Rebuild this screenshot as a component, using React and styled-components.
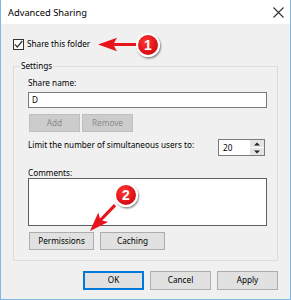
import React from "react";
import styled, { createGlobalStyle } from "styled-components";

const Global = createGlobalStyle`
  html, body { margin: 0; padding: 0; background: #ffffff; }
  * { box-sizing: border-box; }
`;

const FONT = `"Segoe UI", "Noto Sans", "Liberation Sans", sans-serif`;
const FS = 8.2;

const Window = styled.div`
  position: relative;
  width: 291px;
  height: 300px;
  border: 1px solid #82b6e4;
  border-top: none;
  background: #f0f0f0;
  font-family: ${FONT};
  font-size: ${FS}px;
  color: #000;
  display: flex;
  flex-direction: column;
`;

const TitleBar = styled.div`
  height: 24px;
  flex: none;
  background: #ffffff;
  display: flex;
  align-items: center;
  justify-content: space-between;
  padding: 0 6px 0 7px;
`;

const Title = styled.span`
  font-size: 9.3px;
  line-height: 12px;
  margin-top: 2px;
`;

const Body = styled.div`
  padding: 14px 12px 0 12px;
  display: flex;
  flex-direction: column;
`;

const CheckRow = styled.label`
  display: flex;
  align-items: center;
  gap: 3px;
  height: 12px;
  line-height: 12px;
`;

const CheckBox = styled.span`
  width: 11px;
  height: 11px;
  border: 1px solid #333;
  background: #fff;
  display: flex;
  align-items: center;
  justify-content: center;
`;

const GroupBox = styled.fieldset`
  margin: 10px 0 0 0;
  padding: 0 10px 10px 6px;
  border: 1px solid #dcdcdc;
  min-width: 0;
`;

const Legend = styled.legend`
  padding: 0 1px;
  line-height: 12px;
  font-size: ${FS}px;
`;

const GroupContent = styled.div`
  padding-left: 8px;
  display: flex;
  flex-direction: column;
`;

const Label = styled.div`
  line-height: ${(p) => p.$lh || 12}px;
  margin-top: ${(p) => p.$mt || 0}px;
`;

const TextBox = styled.div`
  height: 16px;
  margin-top: 3px;
  border: 1px solid #7a7a7a;
  background: #fff;
  padding: 0 3px;
  line-height: 14px;
`;

const ButtonRow = styled.div`
  display: flex;
  gap: ${(p) => p.$gap}px;
  margin-top: ${(p) => p.$mt}px;
  padding-left: 1px;
  justify-content: ${(p) => (p.$end ? "flex-end" : "flex-start")};
`;

const Button = styled.button`
  font-family: ${FONT};
  font-size: ${FS}px;
  width: ${(p) => p.$w}px;
  height: ${(p) => p.$h || 18}px;
  padding: 0;
  margin: 0;
  background: ${(p) => (p.disabled ? "#cccccc" : "#e1e1e1")};
  color: ${(p) => (p.disabled ? "#8a8a8a" : "#000")};
  border: ${(p) => (p.$default ? "2px solid #0078d7" : p.disabled ? "1px solid #bfbfbf" : "1px solid #adadad")};
  line-height: 1;
`;

const LimitRow = styled.div`
  display: flex;
  align-items: flex-start;
  justify-content: space-between;
  margin-top: 7px;
  padding-right: 2px;
`;

const Spin = styled.div`
  width: 47px;
  height: 17px;
  border: 1px solid #7a7a7a;
  background: #fff;
  display: flex;
`;

const SpinValue = styled.div`
  flex: 1;
  padding-left: 4px;
  line-height: 15px;
`;

const SpinButtons = styled.div`
  width: 14px;
  display: flex;
  flex-direction: column;
  gap: 1px;
  background: #fff;
`;

const SpinBtn = styled.div`
  flex: 1;
  background: #e5e5e5;
  display: flex;
  align-items: center;
  justify-content: center;
`;

const Memo = styled.div`
  height: 48px;
  border: 1px solid #5f5f5f;
  background: #fff;
`;

const Overlay = styled.svg`
  position: absolute;
  left: -1px;
  top: 0;
  width: 291px;
  height: 300px;
  pointer-events: none;
  overflow: visible;
`;

const Badge = styled.div`
  position: absolute;
  left: ${(p) => p.$x - 12}px;
  top: ${(p) => p.$y - 12}px;
  width: 24px;
  height: 24px;
  border-radius: 50%;
  border: 2px solid #fff;
  background: radial-gradient(circle at 40% 35%, #ff3b30 0%, #e0141b 55%, #b5060c 100%);
  box-shadow: 1px 1.5px 2px rgba(0, 0, 0, 0.45);
  color: #fff;
  font-family: "Liberation Sans", Arial, sans-serif;
  font-weight: bold;
  font-size: 14px;
  display: flex;
  align-items: center;
  justify-content: center;
  line-height: 1;
`;

function Arrow({ x, y, angle, len }) {
  return (
    <g transform={`translate(${x} ${y}) rotate(${angle})`}>
      <polygon
        points={`0,0 19,-6.8 16,-1.6 ${len},-1.6 ${len},1.6 16,1.6 19,6.8`}
        fill="#e8141b"
      />
    </g>
  );
}

export default function App() {
  return (
    <>
      <Global />
      <Window>
        <TitleBar>
          <Title>Advanced Sharing</Title>
          <svg width="11" height="11" viewBox="0 0 11 11">
            <path d="M0.5 0.5 L10.5 10.5 M10.5 0.5 L0.5 10.5" stroke="#333" strokeWidth="1.1" />
          </svg>
        </TitleBar>
        <Body>
          <CheckRow>
            <CheckBox>
              <svg width="9" height="9" viewBox="0 0 9 9">
                <polyline points="0.8,4.3 3.3,7 8.3,1" fill="none" stroke="#333" strokeWidth="1.2" />
              </svg>
            </CheckBox>
            Share this folder
          </CheckRow>
          <GroupBox>
            <Legend>Settings</Legend>
            <GroupContent>
              <Label $mt={5}>Share name:</Label>
              <TextBox>D</TextBox>
              <ButtonRow $gap={2} $mt={6}>
                <Button disabled $w={51}>Add</Button>
                <Button disabled $w={51}>Remove</Button>
              </ButtonRow>
              <LimitRow>
                <Label>Limit the number of simultaneous users to:</Label>
                <Spin>
                  <SpinValue>20</SpinValue>
                  <SpinButtons>
                    <SpinBtn>
                      <svg width="6" height="4" viewBox="0 0 6 4">
                        <polygon points="0,3.5 3,0.5 6,3.5" fill="#222" />
                      </svg>
                    </SpinBtn>
                    <SpinBtn>
                      <svg width="6" height="4" viewBox="0 0 6 4">
                        <polygon points="0,0.5 3,3.5 6,0.5" fill="#222" />
                      </svg>
                    </SpinBtn>
                  </SpinButtons>
                </Spin>
              </LimitRow>
              <Label $mt={11} $lh={11}>Comments:</Label>
              <Memo />
              <ButtonRow $gap={6} $mt={6}>
                <Button $w={65}>Permissions</Button>
                <Button $w={65}>Caching</Button>
              </ButtonRow>
            </GroupContent>
          </GroupBox>
          <ButtonRow $gap={6} $mt={10} $end>
            <Button $default $w={61} $h={19}>OK</Button>
            <Button $w={61} $h={19}>Cancel</Button>
            <Button $w={61} $h={19}>Apply</Button>
          </ButtonRow>
        </Body>
        <Overlay viewBox="0 0 291 300">
          <Arrow x={98} y={44.5} angle={0} len={139 - 98} />
          <Arrow x={90} y={231} angle={-46} len={36} />
        </Overlay>
        <Badge $x={147} $y={45}>1</Badge>
        <Badge $x={125} $y={195}>2</Badge>
      </Window>
    </>
  );
}
